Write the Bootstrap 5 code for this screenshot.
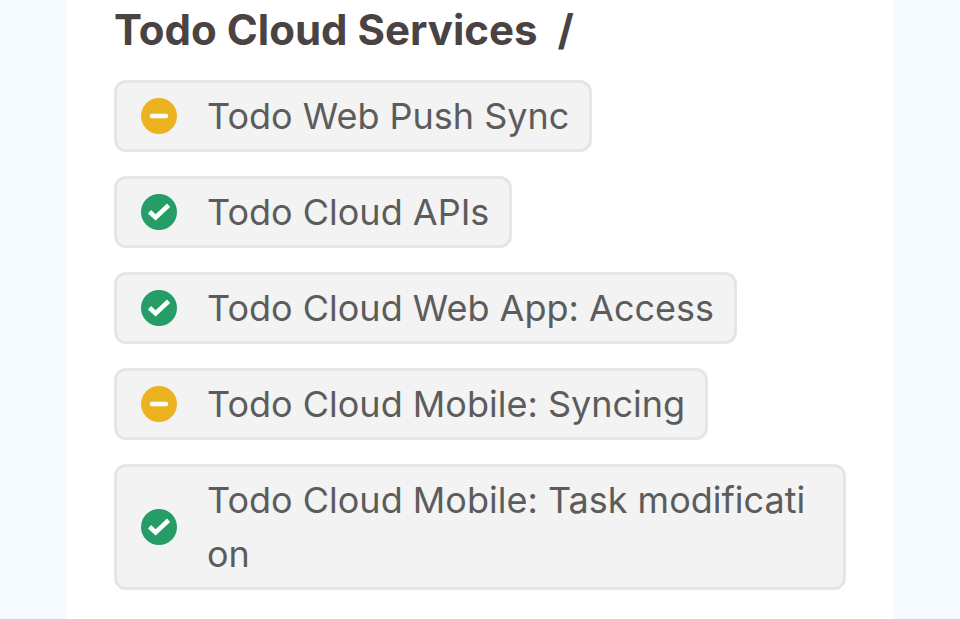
<!DOCTYPE html>
<html lang="en">
<head>
<meta charset="utf-8">
<meta name="viewport" content="width=device-width, initial-scale=1">
<title>Todo Cloud Services</title>
<link href="https://cdn.jsdelivr.net/npm/bootstrap@5.3.0/dist/css/bootstrap.min.css" rel="stylesheet">
<style>
body { background: #f4faff; font-family: Inter, "Liberation Sans", sans-serif; color: #5c5c5c; }
.page { padding: 0 66px; }
.panel { padding: 0 48px 30px; }
.panel-title { gap: 20px; font-size: 42px; line-height: 60px; font-weight: 700; color: #4a4343; margin-bottom: 20px; }
.services { gap: 24px; }
.service { gap: 30px; padding: 6px 20px 6px 24px; border: 3px solid #e6e6e6; border-radius: 12px; background: #f3f3f3; font-size: 36px; line-height: 54px; }
.service-name { word-break: break-all; }
.status { width: 36px; height: 36px; }
</style>
</head>
<body>
<div class="page min-vh-100 d-flex flex-column">
  <main class="panel bg-white flex-grow-1">
    <h1 class="panel-title d-flex"><span>Todo Cloud Services</span><span>/</span></h1>
    <ul class="services list-unstyled d-flex flex-column align-items-start mb-0">
      <li class="service d-flex align-items-center mw-100">
        <svg class="status flex-shrink-0" viewBox="0 0 36 36" role="img" aria-label="Degraded"><circle cx="18" cy="18" r="18" fill="#ecb21f"/><path d="M11 18H25" stroke="#fff" stroke-width="4.4" stroke-linecap="round"/></svg>
        <span class="service-name">Todo Web Push Sync</span>
      </li>
      <li class="service d-flex align-items-center mw-100">
        <svg class="status flex-shrink-0" viewBox="0 0 36 36" role="img" aria-label="Operational"><circle cx="18" cy="18" r="18" fill="#249d67"/><path d="M8.5 17.8L14.6 23.4L27.6 11.2" fill="none" stroke="#fff" stroke-width="4.6"/></svg>
        <span class="service-name">Todo Cloud APIs</span>
      </li>
      <li class="service d-flex align-items-center mw-100">
        <svg class="status flex-shrink-0" viewBox="0 0 36 36" role="img" aria-label="Operational"><circle cx="18" cy="18" r="18" fill="#249d67"/><path d="M8.5 17.8L14.6 23.4L27.6 11.2" fill="none" stroke="#fff" stroke-width="4.6"/></svg>
        <span class="service-name">Todo Cloud Web App: Access</span>
      </li>
      <li class="service d-flex align-items-center mw-100">
        <svg class="status flex-shrink-0" viewBox="0 0 36 36" role="img" aria-label="Degraded"><circle cx="18" cy="18" r="18" fill="#ecb21f"/><path d="M11 18H25" stroke="#fff" stroke-width="4.4" stroke-linecap="round"/></svg>
        <span class="service-name">Todo Cloud Mobile: Syncing</span>
      </li>
      <li class="service d-flex align-items-center mw-100">
        <svg class="status flex-shrink-0" viewBox="0 0 36 36" role="img" aria-label="Operational"><circle cx="18" cy="18" r="18" fill="#249d67"/><path d="M8.5 17.8L14.6 23.4L27.6 11.2" fill="none" stroke="#fff" stroke-width="4.6"/></svg>
        <span class="service-name">Todo Cloud Mobile: Task modification</span>
      </li>
    </ul>
  </main>
</div>
<script src="https://cdn.jsdelivr.net/npm/bootstrap@5.3.0/dist/js/bootstrap.bundle.min.js"></script>
</body>
</html>
